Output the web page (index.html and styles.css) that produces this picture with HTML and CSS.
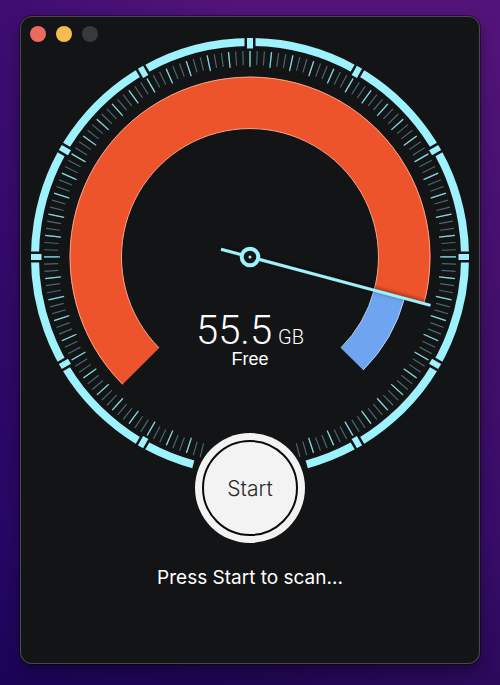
FILE: index.html
```
<!DOCTYPE html>
<html lang="en">
<head>
<meta charset="utf-8">
<meta name="viewport" content="width=device-width, initial-scale=1">
<title>Disk Scan</title>
<link rel="stylesheet" href="styles.css">
</head>
<body>
<main class="window">
  <header class="titlebar">
    <button class="dot close" type="button" aria-label="Close"></button>
    <button class="dot minimize" type="button" aria-label="Minimize"></button>
    <button class="dot zoom" type="button" aria-label="Zoom" disabled></button>
  </header>
  <section class="gauge">
    <svg class="dial" viewBox="-230 -230 460 460" aria-hidden="true">
      <defs>
        <filter id="shadow" x="-20%" y="-50%" width="140%" height="200%">
          <feDropShadow dx="0" dy="-1" stdDeviation="2" flood-color="#000" flood-opacity="0.6"/>
        </filter>
        <line id="gap" x1="0" y1="-222" x2="0" y2="-206"/>
        <line id="mark" x1="0" y1="-219" x2="0" y2="-208.500"/>
        <g id="joint"><use href="#gap" class="gap"/><use href="#mark" class="mark"/></g>
      </defs>
      <path class="ring" d="M-56.700 207.400A215 215 0 1 1 56.700 207.400"/>
      <use href="#joint"/>
      <use href="#joint" transform="rotate(30)"/>
      <use href="#joint" transform="rotate(60)"/>
      <use href="#joint" transform="rotate(90)"/>
      <use href="#joint" transform="rotate(120)"/>
      <use href="#joint" transform="rotate(150)"/>
      <use href="#joint" transform="rotate(210)"/>
      <use href="#joint" transform="rotate(240)"/>
      <use href="#joint" transform="rotate(270)"/>
      <use href="#joint" transform="rotate(300)"/>
      <use href="#joint" transform="rotate(330)"/>
      <path class="minor" pathLength="334" d="M-44.800 193.900A199 199 0 1 1 44.800 193.900"/>
      <path class="major" pathLength="334" d="M-44.500 192.900A198 198 0 1 1 44.500 192.900"/>
      <path class="used" d="M-127.500 127.500A180.300 180.300 0 1 1 174.200 46.700L124.100 33.300A128.500 128.500 0 1 0 -90.900 90.900Z"/>
      <path class="used-edge" d="M-127.300 127.300A180 180 0 1 1 173.900 46.600M124.100 33.300A128.500 128.500 0 1 0 -90.900 90.900"/>
      <path class="free" d="M154.500 41.400A160 160 0 0 1 113.100 113.100L90.900 90.900A128.500 128.500 0 0 0 124.100 33.300Z"/>
      <path class="free-edge" d="M154.500 41.400A160 160 0 0 1 113.100 113.100M90.900 90.900A128.500 128.500 0 0 0 124.100 33.300"/>
      <path class="needle" filter="url(#shadow)" d="M-29 -7.800L180.500 48.400"/>
      <circle class="hub" r="8.300"/>
      <circle class="pin" r="1.500"/>
    </svg>
    <p class="readout">
      <span class="amount"><span class="value">55.5</span><span class="unit">GB</span></span>
      <span class="caption">Free</span>
    </p>
  </section>
  <button class="start" type="button"><span class="face">Start</span></button>
  <p class="status">Press Start to scan...</p>
</main>
</body>
</html>
```
FILE: styles.css
```
* {
  box-sizing: border-box;
}

body {
  margin: 0;
  min-height: 100vh;
  padding: 16px 20px 21px;
  display: flex;
  color: #fff;
  font-family: Roboto, "Liberation Sans", sans-serif;
  background:
    linear-gradient(to right, rgba(20, 0, 100, 0.35), rgba(20, 0, 100, 0) 50%, rgba(80, 20, 120, 0.25)),
    linear-gradient(#54147a, #3e0d68 45%, #2e0a62 80%, #1e0650);
}

.window {
  position: relative;
  flex: 1;
  display: flex;
  flex-direction: column;
  align-items: center;
  padding-top: 11px;
  border-radius: 12px;
  background: #131416;
  box-shadow: inset 0 0 0 1px #4b4b4c, 0 0 0 1px rgba(0, 0, 0, 0.4), 0 6px 14px rgba(0, 0, 0, 0.35);
}

.titlebar {
  position: absolute;
  top: 10px;
  left: 10px;
  display: flex;
  gap: 10px;
}

.dot {
  width: 16px;
  height: 16px;
  padding: 0;
  border: 0;
  border-radius: 50%;
}

.close { background: #ed6a5e; }
.minimize { background: #f5bd4f; }
.zoom { background: #38393b; }

.gauge {
  display: grid;
  width: 100%;
  max-width: 460px;
}

.dial,
.readout {
  grid-area: 1 / 1;
}

.dial {
  display: block;
  width: 100%;
}

.dial path,
.dial line { fill: none; }

.ring { stroke: #9ef2fd; stroke-width: 8; }
.gap { stroke: #131416; stroke-width: 11; }
.mark { stroke: #9ef2fd; stroke-width: 6; }
.minor { stroke: #486a70; stroke-width: 14; stroke-dasharray: 0 0.83 0.34 0.83; }
.major { stroke: #83d4de; stroke-width: 16; stroke-dasharray: 0 4.82 0.36 0.82; }
.dial .used { fill: #ee542b; }
.used-edge { stroke: #f6a389; stroke-width: 1; }
.dial .free { fill: #6ea4f0; }
.free-edge { stroke: #b4d0f8; stroke-width: 1; }
.needle { stroke: #9ef2fd; stroke-width: 3; }
.hub { fill: #131416; stroke: #9ef2fd; stroke-width: 4; }
.pin { fill: #9ef2fd; }

.readout {
  align-self: end;
  margin: 0 0 118px;
  display: flex;
  flex-direction: column;
  align-items: center;
}

.amount {
  display: flex;
  align-items: baseline;
  gap: 6px;
  font-weight: 300;
  line-height: 24px;
}

.value { font-size: 40px; }
.unit { font-size: 20px; }

.caption {
  font-family: "Liberation Sans", sans-serif;
  font-size: 18px;
  line-height: 20px;
}

.start {
  z-index: 1;
  width: 110px;
  height: 110px;
  margin-top: -54px;
  padding: 7px;
  border: 0;
  border-radius: 50%;
  background: #f3f3f3;
  color: #2a2a2c;
  font: 300 21px/1 Inter, "Liberation Sans", sans-serif;
}

.face {
  display: flex;
  align-items: center;
  justify-content: center;
  height: 100%;
  border: 2px solid #0b0b0c;
  border-radius: 50%;
}

.status {
  margin: 23px 0 0;
  font-family: Inter, "Liberation Sans", sans-serif;
  font-size: 19px;
  font-weight: 400;
  line-height: 24px;
}
```
